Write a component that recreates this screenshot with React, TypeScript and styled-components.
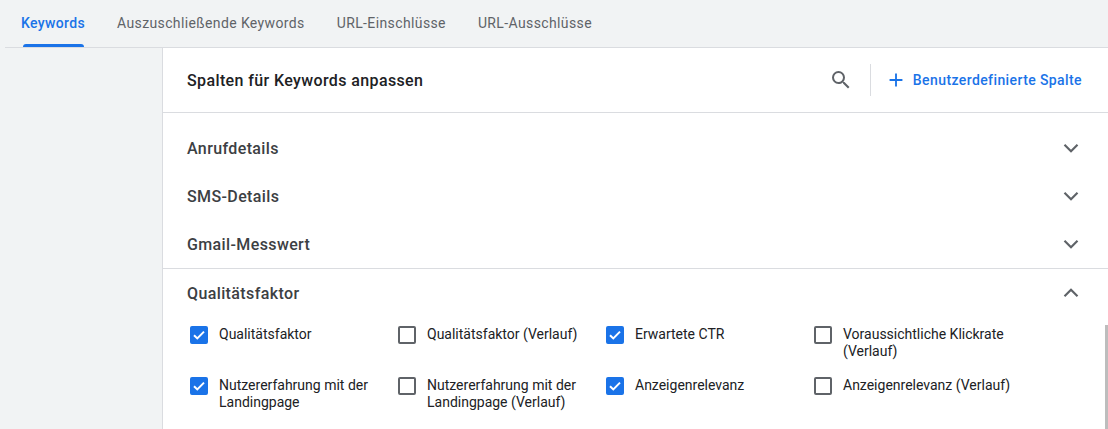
import React from "react";
import styled, { createGlobalStyle } from "styled-components";

const GlobalStyle = createGlobalStyle`
  html, body {
    margin: 0;
    padding: 0;
    background: #f1f3f4;
  }
  * {
    box-sizing: border-box;
  }
`;

const Page = styled.div`
  width: 1108px;
  height: 429px;
  overflow: hidden;
  background: #f1f3f4;
  font-family: Roboto, "Noto Sans", Arial, sans-serif;
  display: flex;
  flex-direction: column;
`;

const TabBar = styled.div`
  display: flex;
  height: 48px;
  margin-left: 5px;
  border-bottom: 1px solid #dadce0;
`;

const Tab = styled.div<{ $active?: boolean }>`
  position: relative;
  display: flex;
  align-items: center;
  padding: 0 16px 2px;
  font-size: 14px;
  font-weight: ${(p) => (p.$active ? 500 : 400)};
  letter-spacing: ${(p) => (p.$active ? "0.35px" : "0.38px")};
  color: ${(p) => (p.$active ? "#1a73e8" : "#5f6368")};

  &::after {
    content: "";
    display: ${(p) => (p.$active ? "block" : "none")};
    position: absolute;
    left: 18px;
    right: 17px;
    bottom: 0;
    height: 3px;
    border-radius: 3px 3px 0 0;
    background: #1a73e8;
  }
`;

const Body = styled.div`
  flex: 1;
  display: flex;
`;

const Sidebar = styled.div`
  width: 162px;
  flex-shrink: 0;
`;

const Panel = styled.div`
  position: relative;
  flex: 1;
  background: #fff;
  border-left: 1px solid #dadce0;
  display: flex;
  flex-direction: column;
`;

const PanelHeader = styled.div`
  height: 65px;
  display: flex;
  align-items: center;
  padding: 0 26px 0 24px;
  border-bottom: 1px solid #dadce0;
`;

const Title = styled.div`
  flex: 1;
  font-size: 16px;
  font-weight: 500;
  letter-spacing: 0.38px;
  color: #202124;
`;

const IconButton = styled.div`
  width: 24px;
  height: 24px;
  display: flex;
  align-items: center;
  justify-content: center;
`;

const Divider = styled.div`
  width: 1px;
  height: 32px;
  background: #dadce0;
  margin: 0 14px 0 17px;
`;

const AddButton = styled.div`
  display: flex;
  align-items: center;
  gap: 6px;
  font-size: 14px;
  font-weight: 500;
  letter-spacing: 0.4px;
  color: #1a73e8;
`;

const Sections = styled.div`
  padding-top: 11px;
`;

const Section = styled.div<{ $divider?: boolean }>`
  border-bottom: ${(p) => (p.$divider ? "1px solid #dadce0" : "none")};
`;

const SectionHead = styled.div`
  height: 48px;
  display: flex;
  align-items: center;
  justify-content: space-between;
  padding: 0 24px;
  font-size: 16px;
  font-weight: 500;
  letter-spacing: 0.38px;
  color: #3c4043;
`;

const OptionGrid = styled.div`
  display: grid;
  grid-template-columns: repeat(4, 208px);
  row-gap: 17px;
  padding: 9px 24px 0;
`;

const Option = styled.label`
  display: flex;
  align-items: flex-start;
  gap: 8px;
  font-size: 14px;
  line-height: 17px;
  color: #202124;
`;

const Box = styled.span<{ $checked?: boolean }>`
  width: 24px;
  height: 24px;
  flex-shrink: 0;
  display: flex;
  justify-content: center;
  align-items: flex-start;
  padding-top: 1px;
  margin-top: -1px;

  span {
    width: 18px;
    height: 18px;
    border-radius: 2px;
    background: ${(p) => (p.$checked ? "#1a73e8" : "#fff")};
    border: 2px solid ${(p) => (p.$checked ? "#1a73e8" : "#5f6368")};
    display: flex;
    align-items: center;
    justify-content: center;
  }
`;

const ScrollThumb = styled.div`
  position: absolute;
  right: 0;
  top: 277px;
  bottom: 0;
  width: 3px;
  background: #bdbdbd;
`;

const Chevron = ({ up }: { up?: boolean }) => (
  <svg width="26" height="26" viewBox="0 0 24 24">
    <polyline
      points={up ? "6,15 12,9 18,15" : "6,9 12,15 18,9"}
      fill="none"
      stroke="#5f6368"
      strokeWidth="2"
    />
  </svg>
);

const Check = ({ checked }: { checked?: boolean }) => (
  <Box $checked={checked}>
    <span>
      {checked && (
        <svg width="14" height="14" viewBox="0 0 14 14">
          <polyline
            points="2,7.2 5.3,10.4 12,3.6"
            fill="none"
            stroke="#fff"
            strokeWidth="2"
          />
        </svg>
      )}
    </span>
  </Box>
);

const options = [
  { label: "Qualitätsfaktor", checked: true },
  { label: "Qualitätsfaktor (Verlauf)", checked: false },
  { label: "Erwartete CTR", checked: true },
  { label: "Voraussichtliche Klickrate (Verlauf)", checked: false },
  { label: "Nutzererfahrung mit der Landingpage", checked: true },
  { label: "Nutzererfahrung mit der Landingpage (Verlauf)", checked: false },
  { label: "Anzeigenrelevanz", checked: true },
  { label: "Anzeigenrelevanz (Verlauf)", checked: false },
];

const tabs = ["Keywords", "Auszuschließende Keywords", "URL-Einschlüsse", "URL-Ausschlüsse"];

export default function App() {
  return (
    <>
      <GlobalStyle />
      <Page>
        <TabBar>
          {tabs.map((t, i) => (
            <Tab key={t} $active={i === 0}>
              {t}
            </Tab>
          ))}
        </TabBar>
        <Body>
          <Sidebar />
          <Panel>
            <PanelHeader>
              <Title>Spalten für Keywords anpassen</Title>
              <IconButton>
                <svg width="24" height="24" viewBox="0 0 24 24">
                  <path
                    fill="#5f6368"
                    d="M15.5 14h-.79l-.28-.27A6.471 6.471 0 0 0 16 9.5 6.5 6.5 0 1 0 9.5 16c1.61 0 3.09-.59 4.23-1.57l.27.28v.79l5 4.99L20.49 19l-4.99-5zm-6 0C7.01 14 5 11.990 5 9.5S7.01 5 9.5 5 14 7.01 14 9.5 11.99 14 9.5 14z"
                  />
                </svg>
              </IconButton>
              <Divider />
              <AddButton>
                <svg width="22" height="22" viewBox="0 0 24 24">
                  <path fill="#1a73e8" d="M19 13h-6v6h-2v-6H5v-2h6V5h2v6h6v2z" />
                </svg>
                Benutzerdefinierte Spalte
              </AddButton>
            </PanelHeader>
            <Sections>
              <Section>
                <SectionHead>
                  Anrufdetails
                  <Chevron />
                </SectionHead>
              </Section>
              <Section>
                <SectionHead>
                  SMS-Details
                  <Chevron />
                </SectionHead>
              </Section>
              <Section $divider>
                <SectionHead>
                  Gmail-Messwert
                  <Chevron />
                </SectionHead>
              </Section>
              <Section>
                <SectionHead>
                  Qualitätsfaktor
                  <Chevron up />
                </SectionHead>
                <OptionGrid>
                  {options.map((o) => (
                    <Option key={o.label}>
                      <Check checked={o.checked} />
                      {o.label}
                    </Option>
                  ))}
                </OptionGrid>
              </Section>
            </Sections>
            <ScrollThumb />
          </Panel>
        </Body>
      </Page>
    </>
  );
}
